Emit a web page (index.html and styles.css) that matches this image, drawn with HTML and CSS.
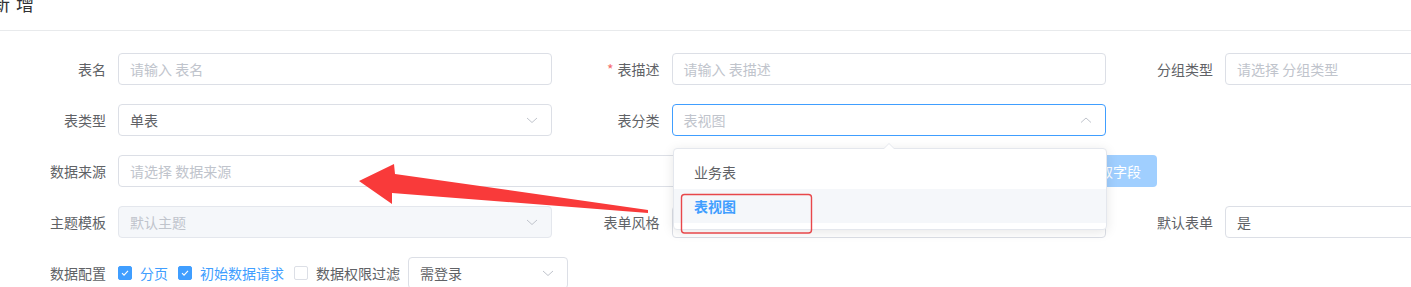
FILE: index.html
```html
<!DOCTYPE html>
<html lang="zh-CN">
<head>
<meta charset="utf-8">
<title>新增</title>
<link rel="stylesheet" href="styles.css">
</head>
<body>
<div class="dialog">
  <div class="dialog-header"><span class="dialog-title">新增</span></div>
  <div class="form">
    <div class="row">
      <div class="item"><span class="label">表名</span><div class="control"><span class="ph">请输入 表名</span></div></div>
      <div class="item"><span class="label"><i class="req">*</i>表描述</span><div class="control"><span class="ph">请输入 表描述</span></div></div>
      <div class="item"><span class="label">分组类型</span><div class="control"><span class="ph">请选择 分组类型</span></div></div>
    </div>
    <div class="row">
      <div class="item"><span class="label">表类型</span><div class="control"><span class="val">单表</span><svg class="chev" viewBox="0 0 12 12"><path d="M1 4l5 4.5 5-4.5"/></svg></div></div>
      <div class="item"><span class="label">表分类</span><div class="control focus"><span class="ph">表视图</span><svg class="chev" viewBox="0 0 12 12"><path d="M1 8.5l5-4.5 5 4.5"/></svg></div></div>
    </div>
    <div class="row">
      <div class="item wide"><span class="label">数据来源</span><div class="control grow"><span class="ph">请选择 数据来源</span></div><button class="btn" type="button">获取字段</button></div>
    </div>
    <div class="row">
      <div class="item"><span class="label">主题模板</span><div class="control disabled"><span class="ph">默认主题</span><svg class="chev" viewBox="0 0 12 12"><path d="M1 4l5 4.5 5-4.5"/></svg></div></div>
      <div class="item"><span class="label">表单风格</span><div class="control"><span class="ph"></span></div></div>
      <div class="item"><span class="label">默认表单</span><div class="control"><span class="val">是</span></div></div>
    </div>
    <div class="row">
      <div class="item auto"><span class="label">数据配置</span>
        <label class="checkbox checked"><span class="box"><svg viewBox="0 0 14 14"><path d="M3.5 7.2l2.4 2.4 4.6-5"/></svg></span><span class="cb-text">分页</span></label>
        <label class="checkbox checked"><span class="box"><svg viewBox="0 0 14 14"><path d="M3.5 7.2l2.4 2.4 4.6-5"/></svg></span><span class="cb-text">初始数据请求</span></label>
        <label class="checkbox last"><span class="box"></span><span class="cb-text">数据权限过滤</span></label>
        <div class="control small"><span class="val">需登录</span><svg class="chev" viewBox="0 0 12 12"><path d="M1 4l5 4.5 5-4.5"/></svg></div>
      </div>
    </div>
  </div>

  <div class="dropdown">
    <span class="popper-arrow"></span>
    <ul class="options">
      <li class="option">业务表</li>
      <li class="option selected">表视图</li>
    </ul>
  </div>

  <svg class="annotation" width="1411" height="287" viewBox="0 0 1411 287">
    <polygon class="red-arrow" points="359,181 394,164 395,174 648,210 648,213 392,193 392,204"/>
    <rect class="red-box" x="681.5" y="194.5" width="130" height="38.5" rx="3"/>
  </svg>
</div>
</body>
</html>
```
FILE: styles.css
```css
html, body {
  margin: 0;
  padding: 0;
}
body {
  width: 1411px;
  height: 287px;
  overflow: hidden;
  background: #fff;
  font-family: "Noto Sans CJK SC", "Noto Sans", sans-serif;
  font-size: 14px;
  color: #606266;
}
.dialog {
  position: relative;
  width: 1411px;
  height: 287px;
}
.dialog-header {
  height: 30px;
  border-bottom: 1px solid #e8eaec;
  overflow: hidden;
}
.dialog-title {
  display: block;
  margin: -9px 0 0 -8px;
  font-size: 18px;
  line-height: 24px;
  letter-spacing: 6px;
  color: #303133;
}
.form {
  display: flex;
  flex-direction: column;
  gap: 19px;
  padding-top: 22px;
}
.row {
  display: flex;
  height: 32px;
}
.item {
  display: flex;
  align-items: center;
  flex: none;
  width: 553.5px;
  height: 32px;
}
.item.wide {
  width: 1157px;
}
.item.auto {
  width: auto;
}
.label {
  flex: none;
  width: 118px;
  padding-right: 12px;
  box-sizing: border-box;
  text-align: right;
  line-height: 32px;
  white-space: nowrap;
  color: #606266;
}
.req {
  font-style: normal;
  color: #f56c6c;
  margin-right: 4px;
}
.control {
  flex: none;
  width: 434px;
  height: 32px;
  box-sizing: border-box;
  border: 1px solid #dcdfe6;
  border-radius: 4px;
  padding: 0 13px 0 11px;
  display: flex;
  align-items: center;
  justify-content: space-between;
  background: #fff;
}
.control.grow {
  flex: 1;
  width: auto;
}
.control.focus {
  border-color: #409eff;
}
.control.disabled {
  background: #f5f7fa;
  border-color: #e4e7ed;
}
.control.small {
  width: 160px;
}
.ph {
  color: #c0c4cc;
  white-space: nowrap;
}
.val {
  color: #606266;
  white-space: nowrap;
}
.chev {
  width: 12px;
  height: 12px;
  flex: none;
  fill: none;
  stroke: #c0c4cc;
  stroke-width: 1;
}
.btn {
  flex: none;
  margin-left: 10px;
  height: 32px;
  padding: 0 16px;
  border: none;
  border-radius: 4px;
  background: #a0cfff;
  color: #fff;
  font-family: inherit;
  font-size: 14px;
}
.checkbox {
  display: flex;
  align-items: center;
  margin-right: 10px;
  color: #606266;
  white-space: nowrap;
}
.checkbox.last {
  margin-right: 8px;
}
.box {
  width: 14px;
  height: 14px;
  box-sizing: border-box;
  border: 1px solid #dcdfe6;
  border-radius: 2px;
  background: #fff;
  display: flex;
}
.box svg {
  width: 12px;
  height: 12px;
  fill: none;
  stroke: #fff;
  stroke-width: 1.3;
}
.checkbox.checked .box {
  background: #409eff;
  border-color: #409eff;
}
.checkbox.checked .cb-text {
  color: #409eff;
}
.cb-text {
  padding-left: 8px;
}
.dropdown {
  position: absolute;
  left: 673px;
  top: 148px;
  width: 434px;
  box-sizing: border-box;
  border: 1px solid #e4e7ed;
  border-radius: 4px;
  background: #fff;
  box-shadow: 0 2px 12px 0 rgba(0, 0, 0, 0.1);
}
.popper-arrow {
  position: absolute;
  top: -6px;
  left: 209px;
  width: 0;
  height: 0;
  border-style: solid;
  border-width: 0 6px 6px;
  border-color: transparent transparent #e4e7ed;
}
.popper-arrow::after {
  content: "";
  position: absolute;
  top: 1px;
  left: -6px;
  border-style: solid;
  border-width: 0 6px 6px;
  border-color: transparent transparent #fff;
}
.options {
  list-style: none;
  margin: 0;
  padding: 6px 0;
}
.option {
  height: 34px;
  line-height: 34px;
  padding: 0 20px;
  color: #606266;
  white-space: nowrap;
}
.option.selected {
  background: #f5f7fa;
  color: #409eff;
  font-weight: 700;
}
.annotation {
  position: absolute;
  left: 0;
  top: 0;
  pointer-events: none;
}
.red-arrow {
  fill: #f93a3a;
}
.red-box {
  fill: none;
  stroke: #e8474a;
  stroke-width: 1.4;
}
```
